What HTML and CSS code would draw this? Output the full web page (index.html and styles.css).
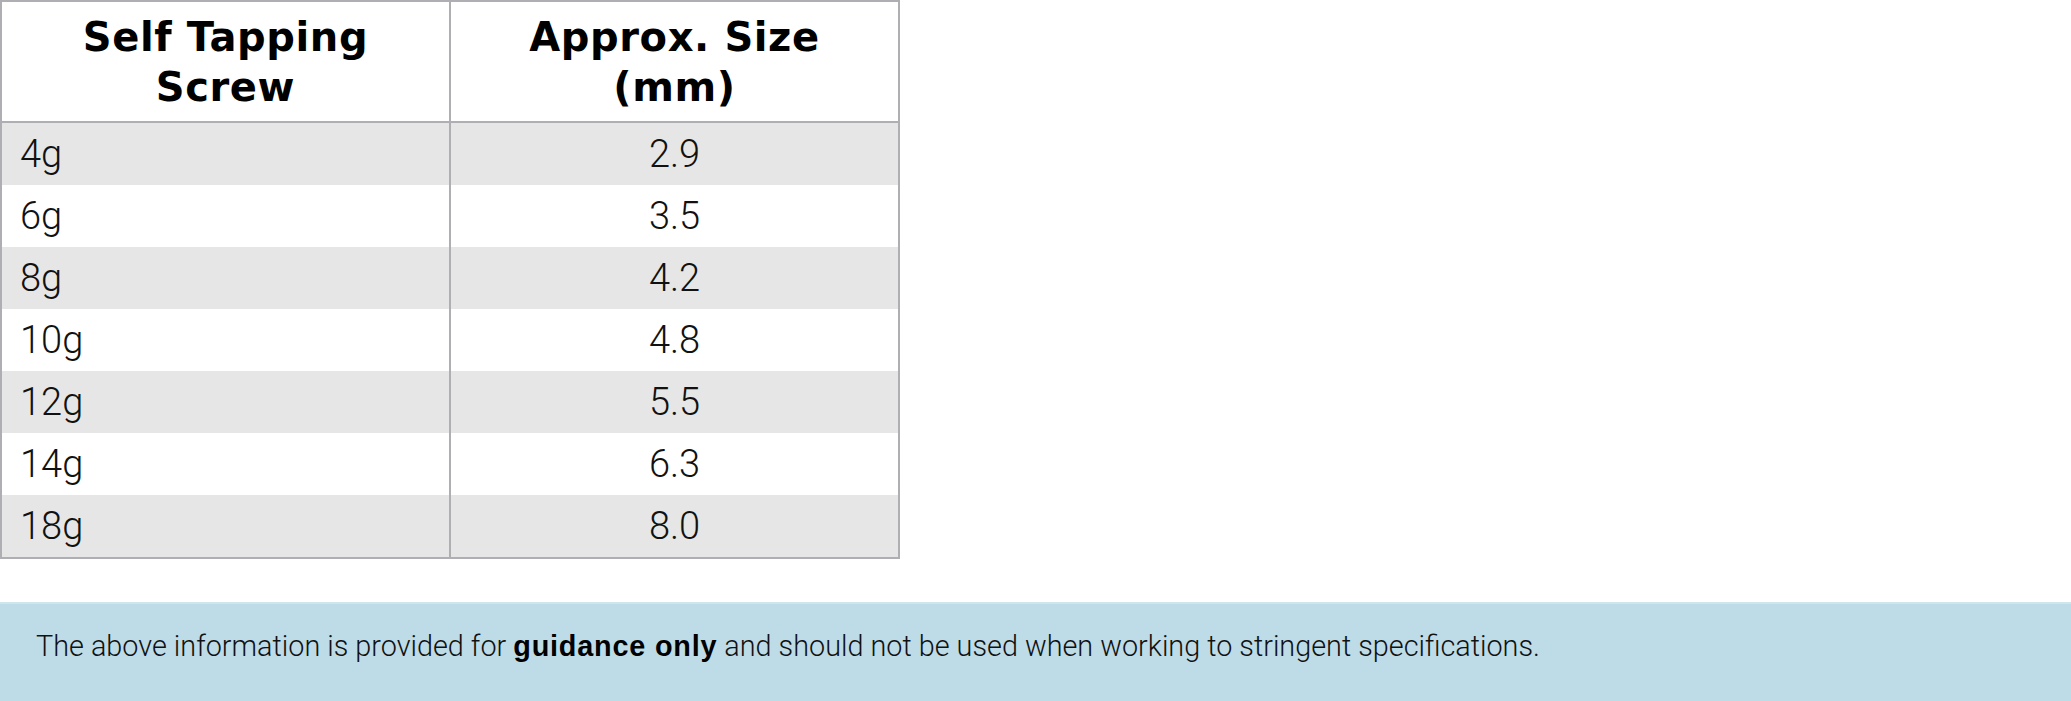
FILE: index.html
```html
<!DOCTYPE html>
<html>
<head>
<meta charset="utf-8">
<link rel="stylesheet" href="styles.css">
</head>
<body>
<table class="sizes">
  <thead>
    <tr><th>Self Tapping<br>Screw</th><th>Approx. Size<br>(mm)</th></tr>
  </thead>
  <tbody>
    <tr><td>4g</td><td class="num">2.9</td></tr>
    <tr><td>6g</td><td class="num">3.5</td></tr>
    <tr><td>8g</td><td class="num">4.2</td></tr>
    <tr><td>10g</td><td class="num">4.8</td></tr>
    <tr><td>12g</td><td class="num">5.5</td></tr>
    <tr><td>14g</td><td class="num">6.3</td></tr>
    <tr><td>18g</td><td class="num">8.0</td></tr>
  </tbody>
</table>
<div class="note">
  <p>The above information is provided for <strong>guidance only</strong> and should not be used when working to stringent specifications.</p>
</div>
</body>
</html>
```
FILE: styles.css
```css
html, body {
  margin: 0;
  padding: 0;
  background: #ffffff;
}
body {
  font-family: "Liberation Sans", Arial, sans-serif;
  color: #111;
}
.sizes {
  border-collapse: collapse;
  width: 900px;
  table-layout: fixed;
  margin: 0;
  border: 2px solid #afafb3;
}
.sizes th {
  border: 2px solid #afafb3;
  height: 119px;
  font-family: "DejaVu Sans", "Liberation Sans", sans-serif;
  font-size: 40px;
  font-weight: bold;
  line-height: 50px;
  letter-spacing: 0.6px;
  color: #000;
  padding: 0;
  text-align: center;
  vertical-align: middle;
}
.sizes td {
  border-left: 2px solid #afafb3;
  border-right: 2px solid #afafb3;
  border-top: 0;
  border-bottom: 0;
  height: 62px;
  padding: 0 0 0 18px;
  font-family: "Roboto", "Liberation Sans", sans-serif;
  font-weight: 300;
  font-size: 38px;
  color: #111;
  line-height: 1;
}
.sizes td.num {
  text-align: center;
  padding-left: 0;
}
.sizes tbody tr:nth-child(odd) td {
  background: #e6e6e6;
}
.note {
  margin-top: 43px;
  background: #bddce8;
  border-top: 2px solid #cfe5ee;
  padding: 0 36px 20px;
  height: 84px;
  display: flex;
  align-items: center;
}
.note p {
  margin: 0;
  font-family: "Roboto", "Liberation Sans", sans-serif;
  font-weight: 300;
  font-size: 28.8px;
  color: #111;
}
.note strong {
  font-family: "Liberation Sans", Arial, sans-serif;
  font-weight: bold;
  letter-spacing: 0.8px;
  color: #000;
}
```
